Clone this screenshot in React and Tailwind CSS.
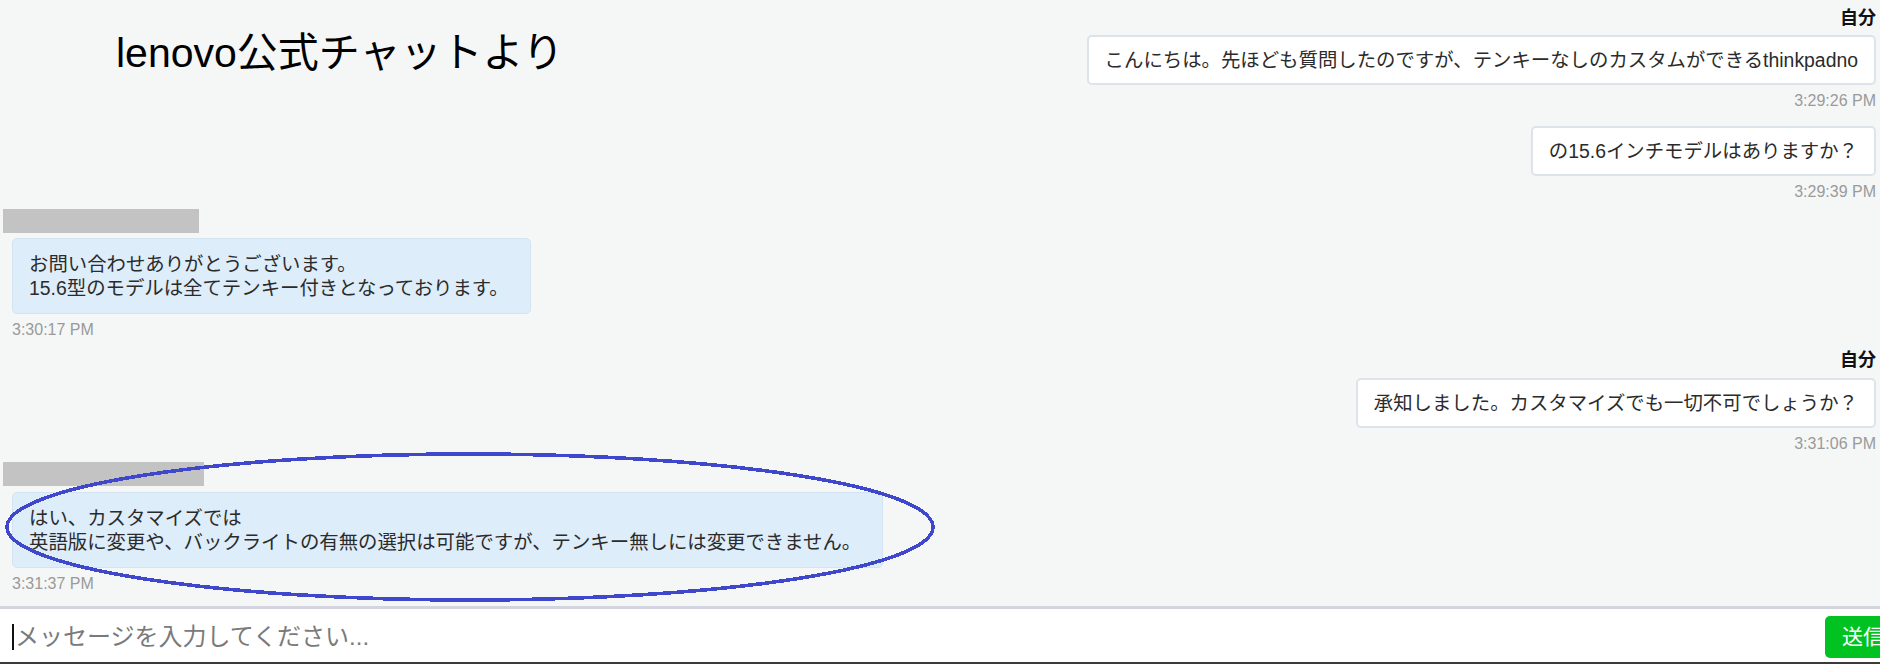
import React from "react";

const FONT = "font-['Liberation_Sans','Noto_Sans_CJK_JP',sans-serif]";

function MyBubble({ text }) {
  return (
    <div className="rounded-[5px] border-2 border-[#dde3ea] bg-white px-4 py-[11px] text-[19.4px] leading-[24px] text-[#2b2b2b] whitespace-nowrap">
      {text}
    </div>
  );
}

function TheirBubble({ lines }) {
  return (
    <div className="ml-[12px] self-start rounded-[5px] border border-[#d3e3f1] bg-[#ddedfa] px-4 py-[13px] text-[19.4px] leading-[24px] text-[#2b2b2b] whitespace-nowrap">
      {lines.map((l, i) => (
        <div key={i} className="pr-[5px]">{l}</div>
      ))}
    </div>
  );
}

function Time({ t, left }) {
  return (
    <div
      className={`mt-[7px] font-['Liberation_Sans',sans-serif] text-[16px] leading-[18px] text-[#9a9a9a] ${left ? "ml-[12px] self-start" : ""}`}
    >
      {t}
    </div>
  );
}

function Label() {
  return <div className="text-[18px] font-bold leading-[20px] text-[#111]">自分</div>;
}

export default function App() {
  return (
    <div className={`relative w-[1880px] h-[664px] overflow-hidden bg-white ${FONT}`}>
      {/* chat area */}
      <div className="h-[606px] overflow-hidden bg-[#f5f7f7] pt-[8px] flex flex-col">
        {/* right block 1 */}
        <div className="flex flex-col items-end pr-[4px]">
          <Label />
          <div className="mt-[7px]">
            <MyBubble text="こんにちは。先ほども質問したのですが、テンキーなしのカスタムができるthinkpadno" />
          </div>
          <Time t="3:29:26 PM" />
          <div className="mt-[16px]">
            <MyBubble text="の15.6インチモデルはありますか？" />
          </div>
          <Time t="3:29:39 PM" />
        </div>

        {/* left block 1 */}
        <div className="flex flex-col mt-[8px]">
          <div className="ml-[3px] h-[24px] w-[196px] bg-[#c3c3c3]" />
          <div className="mt-[5px] flex flex-col">
            <TheirBubble
              lines={[
                "お問い合わせありがとうございます。",
                "15.6型のモデルは全てテンキー付きとなっております。",
              ]}
            />
          </div>
          <Time t="3:30:17 PM" left />
        </div>

        {/* right block 2 */}
        <div className="flex flex-col items-end pr-[4px] mt-[11px]">
          <Label />
          <div className="mt-[8px]">
            <MyBubble text="承知しました。カスタマイズでも一切不可でしょうか？" />
          </div>
          <Time t="3:31:06 PM" />
        </div>

        {/* left block 2 */}
        <div className="flex flex-col mt-[9px]">
          <div className="ml-[3px] h-[24px] w-[201px] bg-[#c3c3c3]" />
          <div className="mt-[6px] flex flex-col">
            <TheirBubble
              lines={[
                "はい、カスタマイズでは",
                "英語版に変更や、バックライトの有無の選択は可能ですが、テンキー無しには変更できません。",
              ]}
            />
          </div>
          <Time t="3:31:37 PM" left />
        </div>
      </div>

      {/* input area */}
      <div className="h-[56px] border-t-[3px] border-[#d2d5df] bg-white flex items-center pt-[3px]">
        <div className="flex flex-1 items-center pl-[12px]">
          <span className="h-[26px] w-[2px] bg-[#111]" />
          <input
            className="flex-1 bg-transparent text-[24px] leading-[30px] text-[#222] outline-none placeholder:text-[#7a7a7a] pl-[1px]"
            placeholder="メッセージを入力してください..."
          />
        </div>
        <button className="shrink-0 -mr-[21px] h-[42px] rounded-[5px] bg-[#00c322] px-[17px] text-[21px] leading-[42px] text-white">
          送信
        </button>
      </div>
      <div className="h-[2px] bg-[#3a3a3a]" />

      {/* annotation title */}
      <div className="absolute left-[116px] top-[31px] text-[41px] leading-[44px] text-black whitespace-nowrap">
        lenovo公式チャットより
      </div>

      {/* annotation ellipse */}
      <svg
        className="pointer-events-none absolute left-0 top-0"
        width="1880"
        height="664"
        viewBox="0 0 1880 664"
      >
        <ellipse
          cx="470"
          cy="527"
          rx="463"
          ry="73"
          fill="none"
          stroke="#3f48cc"
          strokeWidth="3.6"
          shapeRendering="crispEdges"
        />
      </svg>
    </div>
  );
}
